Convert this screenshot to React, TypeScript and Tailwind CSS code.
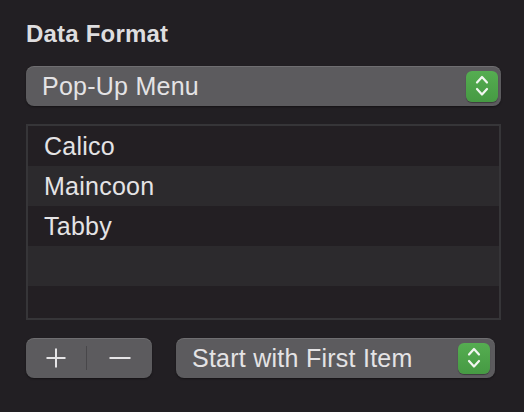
const font = { fontFamily: '"Liberation Sans", Arial, sans-serif' };

function Stepper() {
	return (
		<div className="flex h-[31px] w-[32px] items-center justify-center rounded-[6px] bg-gradient-to-b from-[#55ad51] to-[#469a43] shadow-[0_1px_1px_rgba(0,0,0,0.35)]">
			<svg width="32" height="31" viewBox="0 0 32 31" fill="none">
				<path
					d="M11 11.5 L16 6 L21 11.5"
					stroke="#f2f6f1"
					strokeWidth="2.2"
					strokeLinecap="round"
					strokeLinejoin="round"
				/>
				<path
					d="M11 18 L16 23.5 L21 18"
					stroke="#f2f6f1"
					strokeWidth="2.2"
					strokeLinecap="round"
					strokeLinejoin="round"
				/>
			</svg>
		</div>
	);
}

function PopUp({ label, className }: { label: string; className?: string }) {
	return (
		<div
			className={`flex h-[40px] items-center justify-between rounded-[8px] bg-[#5c5b5e] pl-[16px] pr-[3px] shadow-[inset_0_1px_0_rgba(255,255,255,0.12),0_1px_2px_rgba(0,0,0,0.4)] ${className ?? ""}`}
		>
			<span className="text-[25px] leading-[40px] tracking-[0.25px] text-[#e4e3e5]">
				{label}
			</span>
			<Stepper />
		</div>
	);
}

const cats = ["Calico", "Maincoon", "Tabby", "", ""];

export default function App() {
	return (
		<div
			className="flex h-[412px] w-[524px] flex-col bg-[#221f23] pl-[26px] pr-[23px] pt-[20px]"
			style={font}
		>
			<div className="text-[24px] font-bold leading-[28px] tracking-[0.2px] text-[#dedddf]">
				Data Format
			</div>

			<PopUp label="Pop-Up Menu" className="mt-[18px] w-[475px]" />

			{/* Table */}
			<div className="mt-[18px] flex h-[196px] w-[475px] flex-col overflow-hidden border-2 border-[#363538]">
				{cats.map((c, i) => (
					<div
						key={i}
						className={`h-[40px] shrink-0 pl-[16px] text-[25px] leading-[40px] tracking-[0.25px] text-[#e4e3e5] ${
							i % 2 === 1 ? "bg-[#2c2a2d]" : "bg-[#231f23]"
						}`}
					>
						{c}
					</div>
				))}
			</div>

			<div className="mt-[18px] flex items-center gap-[24px]">
				<div className="flex h-[40px] w-[126px] items-center rounded-[8px] bg-[#5c5b5e] shadow-[inset_0_1px_0_rgba(255,255,255,0.12),0_1px_2px_rgba(0,0,0,0.4)]">
					<button type="button" className="flex h-full w-[60px] items-center justify-center">
						<svg width="20" height="20" viewBox="0 0 20 20">
							<path d="M10 0.5 V19.5 M0.5 10 H19.5" stroke="#e6e5e7" strokeWidth="2" />
						</svg>
					</button>
					<div className="h-[24px] w-[1px] bg-[#48474a]" />
					<button type="button" className="flex h-full flex-1 items-center justify-center">
						<svg width="22" height="4" viewBox="0 0 22 4">
							<path d="M0.5 2 H21.5" stroke="#e6e5e7" strokeWidth="2" />
						</svg>
					</button>
				</div>
				<PopUp label="Start with First Item" className="w-[319px] pr-[5px]" />
			</div>
		</div>
	);
}
